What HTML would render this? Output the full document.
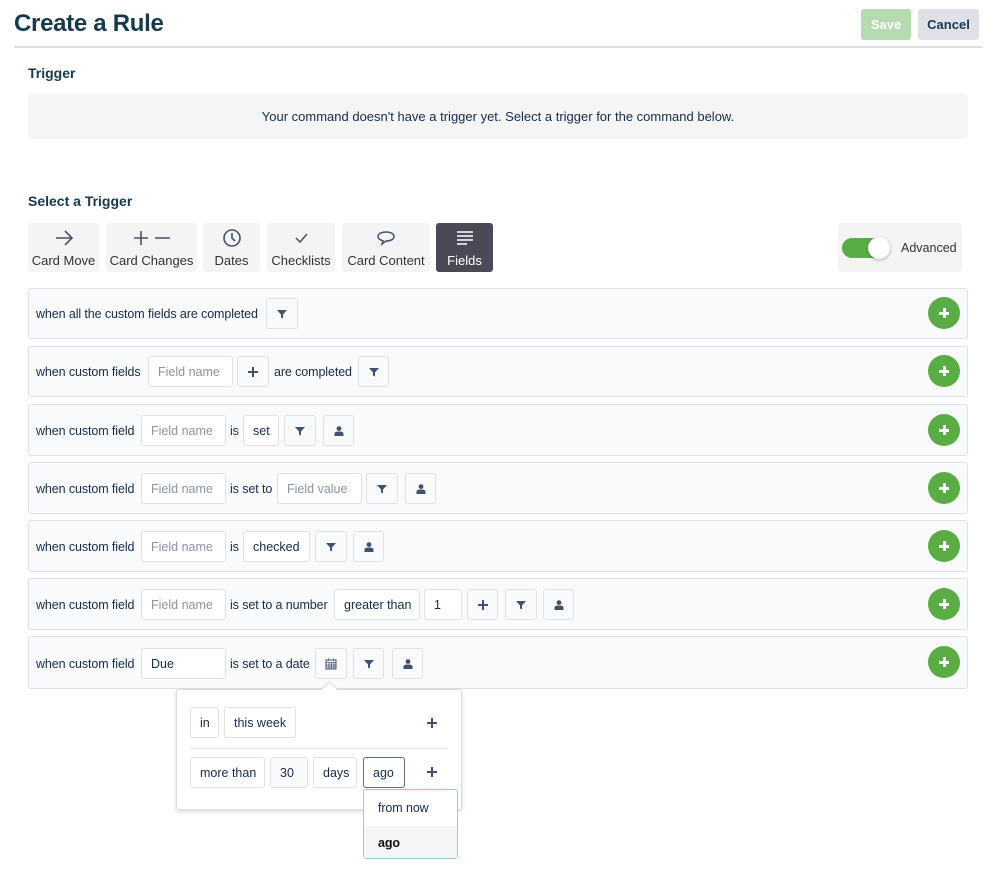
<!DOCTYPE html>
<html><head><meta charset="utf-8"><style>
*{box-sizing:border-box;margin:0;padding:0}
body{width:999px;height:884px;background:#fff;font-family:"Liberation Sans",sans-serif;color:#172b4d;position:relative;overflow:hidden}
.a{position:absolute}
h1{position:absolute;left:14px;top:10px;font-size:24px;font-weight:bold;color:#17394d;letter-spacing:-0.3px}
.hr{position:absolute;left:14px;top:46px;width:968px;height:2px;background:#ddd}
.btn{position:absolute;top:9px;height:31px;border-radius:3px;font-size:13px;font-weight:bold;display:flex;align-items:center;justify-content:center}
h2{position:absolute;left:28px;font-size:14px;font-weight:bold;color:#17394d}
.tab{position:absolute;top:223px;height:49px;background:#f4f4f4;border-radius:3px;font-size:13px;color:#333;text-align:center}
.tab svg{display:block;margin:5px auto 0}
.tab span{position:absolute;left:0;right:0;top:30px}
.row{position:absolute;left:28px;width:940px;background:#f9fafc;border:1px solid #dfe1e6;border-radius:3px}
.t{position:absolute;font-size:12.5px;color:#172b4d;line-height:16px;letter-spacing:-0.1px}
.box{position:absolute;height:31px;border:1px solid #dfe1e6;border-radius:3px;background:#fff;font-size:12.5px;display:flex;align-items:center;padding-left:9px;color:#172b4d}
.ph{color:#8b95a1;padding-left:9px}
.ic{justify-content:center;padding:0;background:#f9fafc}
.plus{position:absolute;left:928px;width:32px;height:32px;border-radius:50%;background:#5aac44}
.plus:before,.plus:after{content:"";position:absolute;background:#fff;left:11px;top:14.5px;width:10px;height:3px}
.plus:after{left:14.5px;top:11px;width:3px;height:10px}
.sp{position:absolute;width:10px;height:10px}
.sp:before,.sp:after{content:"";position:absolute;background:#42526e;left:0;top:4px;width:10px;height:2.4px}
.sp:after{left:4px;top:0;width:2.4px;height:10px}
</style></head><body>
<h1>Create a Rule</h1>
<div class="btn" style="left:861px;width:50px;background:#b5dbb0;color:#fff">Save</div>
<div class="btn" style="left:918px;width:61px;background:#dfe1e6;color:#17394d">Cancel</div>
<div class="hr"></div>
<h2 style="top:65px">Trigger</h2>
<div class="a" style="left:28px;top:94px;width:940px;height:45px;background:#f5f5f5;border-radius:4px;font-size:13px;text-align:center;line-height:46px;color:#172b4d">Your command doesn't have a trigger yet. Select a trigger for the command below.</div>
<h2 style="top:193px">Select a Trigger</h2>

<svg width="0" height="0" style="position:absolute"><defs>
<symbol id="fl" viewBox="0 0 10 10"><path d="M0 1h10L6 5.5V9.5L4 8.5V5.5z" fill="#42526e"/></symbol>
<symbol id="pe" viewBox="0 0 10 10"><circle cx="5" cy="2.6" r="2.4" fill="#42526e"/><path d="M0.5 10v-2.2C0.5 6.2 2 5.5 5 5.5s4.5 .7 4.5 2.3V10z" fill="#42526e"/></symbol>
</defs></svg>

<div class="tab" style="left:28px;width:71px"><svg width="22" height="20" viewBox="0 0 22 20"><path d="M3 10h16M12 3l7 7-7 7" stroke="#42526e" stroke-width="1.6" fill="none"/></svg><span>Card Move</span></div>
<div class="tab" style="left:106px;width:91px"><svg width="40" height="20" viewBox="0 0 40 20"><path d="M2 10h14M9 3v14M23 10h15" stroke="#42526e" stroke-width="1.6" fill="none"/></svg><span>Card Changes</span></div>
<div class="tab" style="left:203px;width:57px"><svg width="22" height="20" viewBox="0 0 22 20"><circle cx="11" cy="10" r="8" stroke="#42526e" stroke-width="1.6" fill="none"/><path d="M11 5v5l3 3" stroke="#42526e" stroke-width="1.6" fill="none"/></svg><span>Dates</span></div>
<div class="tab" style="left:267px;width:68px"><svg width="22" height="20" viewBox="0 0 22 20"><path d="M6 10l4 4 7-8" stroke="#42526e" stroke-width="1.5" fill="none"/></svg><span>Checklists</span></div>
<div class="tab" style="left:342px;width:88px"><svg width="22" height="20" viewBox="0 0 22 20"><path d="M11 4c5 0 8 2 8 4.5S16 13 11 13l-4 3 1-3.3C5 12 3 10.5 3 8.5 3 6 6 4 11 4z" stroke="#42526e" stroke-width="1.5" fill="none"/></svg><span>Card Content</span></div>
<div class="tab" style="left:436px;width:57px;background:#4a4a57;color:#fff"><svg width="22" height="20" viewBox="0 0 22 20"><path d="M3 4h16M3 8h16M3 12h16M3 16h10" stroke="#fff" stroke-width="1.6"/></svg><span>Fields</span></div>
<div class="tab" style="left:838px;width:124px">
 <div class="a" style="left:4px;top:15px;width:48px;height:20px;border-radius:10px;background:#5aac44"></div>
 <div class="a" style="left:30px;top:14px;width:22px;height:22px;border-radius:50%;background:#fff;box-shadow:0 1px 3px rgba(0,0,0,.3)"></div>
 <div class="a" style="left:63px;top:18px;font-size:12.5px">Advanced</div>
</div>

<div class="row" style="top:288px;height:51px"><div class="plus" style="top:8px;left:899px"></div></div>
<div class="t" style="left:36px;top:306px">when all the custom fields are completed</div>
<div class="box ic" style="left:266px;top:298px;width:32px"><svg width="10" height="10"><use href="#fl"/></svg></div>

<div class="row" style="top:346px;height:51px"><div class="plus" style="top:8px;left:899px"></div></div>
<div class="t" style="left:36px;top:364px">when custom fields</div>
<div class="box ph" style="left:148px;top:356px;width:85px">Field name</div>
<div class="box ic" style="left:237px;top:356px;width:32px"><div class="sp" style="left:10px;top:10px"></div></div>
<div class="t" style="left:274px;top:364px">are completed</div>
<div class="box ic" style="left:358px;top:356px;width:31px"><svg width="10" height="10"><use href="#fl"/></svg></div>

<div class="row" style="top:404px;height:52px"><div class="plus" style="top:9px;left:899px"></div></div>
<div class="t" style="left:36px;top:423px">when custom field</div>
<div class="box ph" style="left:141px;top:415px;width:85px">Field name</div>
<div class="t" style="left:230px;top:423px">is</div>
<div class="box" style="left:243px;top:415px;width:36px">set</div>
<div class="box ic" style="left:284px;top:415px;width:32px"><svg width="10" height="10"><use href="#fl"/></svg></div>
<div class="box ic" style="left:323px;top:415px;width:31px"><svg width="10" height="10"><use href="#pe"/></svg></div>

<div class="row" style="top:462px;height:52px"><div class="plus" style="top:9px;left:899px"></div></div>
<div class="t" style="left:36px;top:481px">when custom field</div>
<div class="box ph" style="left:141px;top:473px;width:85px">Field name</div>
<div class="t" style="left:230px;top:481px">is set to</div>
<div class="box ph" style="left:277px;top:473px;width:85px">Field value</div>
<div class="box ic" style="left:366px;top:473px;width:32px"><svg width="10" height="10"><use href="#fl"/></svg></div>
<div class="box ic" style="left:405px;top:473px;width:31px"><svg width="10" height="10"><use href="#pe"/></svg></div>

<div class="row" style="top:520px;height:52px"><div class="plus" style="top:9px;left:899px"></div></div>
<div class="t" style="left:36px;top:539px">when custom field</div>
<div class="box ph" style="left:141px;top:531px;width:85px">Field name</div>
<div class="t" style="left:230px;top:539px">is</div>
<div class="box" style="left:243px;top:531px;width:67px">checked</div>
<div class="box ic" style="left:315px;top:531px;width:32px"><svg width="10" height="10"><use href="#fl"/></svg></div>
<div class="box ic" style="left:353px;top:531px;width:31px"><svg width="10" height="10"><use href="#pe"/></svg></div>

<div class="row" style="top:578px;height:52px"><div class="plus" style="top:9px;left:899px"></div></div>
<div class="t" style="left:36px;top:597px">when custom field</div>
<div class="box ph" style="left:141px;top:589px;width:85px">Field name</div>
<div class="t" style="left:230px;top:597px">is set to a number</div>
<div class="box" style="left:334px;top:589px;width:86px">greater than</div>
<div class="box" style="left:424px;top:589px;width:38px">1</div>
<div class="box ic" style="left:467px;top:589px;width:31px"><div class="sp" style="left:10px;top:10px"></div></div>
<div class="box ic" style="left:505px;top:589px;width:32px"><svg width="10" height="10"><use href="#fl"/></svg></div>
<div class="box ic" style="left:543px;top:589px;width:31px"><svg width="10" height="10"><use href="#pe"/></svg></div>

<div class="row" style="top:636px;height:53px"><div class="plus" style="top:9px;left:899px"></div></div>
<div class="t" style="left:36px;top:656px">when custom field</div>
<div class="box" style="left:141px;top:648px;width:85px">Due</div>
<div class="t" style="left:230px;top:656px">is set to a date</div>
<div class="box ic" style="left:315px;top:648px;width:32px"><svg width="12" height="12" viewBox="0 0 12 12"><rect x="1" y="2" width="10" height="9" fill="none" stroke="#42526e"/><path d="M1 4.5h10M4 4.5v6.5M6.5 4.5v6.5M9 4.5v6.5M1 7h10M1 9h10M3.5 0.5v2.5M8.5 .5v2.5" stroke="#42526e" stroke-width=".8"/></svg></div>
<div class="box ic" style="left:353px;top:648px;width:31px"><svg width="10" height="10"><use href="#fl"/></svg></div>
<div class="box ic" style="left:392px;top:648px;width:31px"><svg width="10" height="10"><use href="#pe"/></svg></div>

<div class="a" style="left:176px;top:689px;width:286px;height:121px;background:#fff;border:1px solid #dcdcdc;border-radius:3px;box-shadow:0 2px 5px rgba(0,0,0,.15)"></div>
<div class="a" style="left:324px;top:683px;width:11px;height:11px;background:#fff;border-left:1px solid #dcdcdc;border-top:1px solid #dcdcdc;transform:rotate(45deg)"></div>
<div class="box" style="left:190px;top:707px;width:29px">in</div>
<div class="box" style="left:224px;top:707px;width:72px">this week</div>
<div class="sp" style="left:427px;top:718px"></div>
<div class="a" style="left:190px;top:748px;width:258px;height:1px;background:#e4e4e4"></div>
<div class="box" style="left:190px;top:757px;width:75px">more than</div>
<div class="box" style="left:270px;top:757px;width:38px;background:#f9fafc">30</div>
<div class="box" style="left:313px;top:757px;width:44px">days</div>
<div class="box" style="left:363px;top:757px;width:42px;border-color:#5e6c84">ago</div>
<div class="sp" style="left:427px;top:767px"></div>
<div class="a" style="left:363px;top:789px;width:95px;height:70px;background:#fff;border:1px solid #9cc9d8;border-radius:3px"></div>
<div class="t" style="left:378px;top:800px">from now</div>
<div class="a" style="left:364px;top:826px;width:93px;height:32px;background:#f4f5f7"></div>
<div class="t" style="left:378px;top:835px;font-weight:bold;color:#111">ago</div>
</body></html>
